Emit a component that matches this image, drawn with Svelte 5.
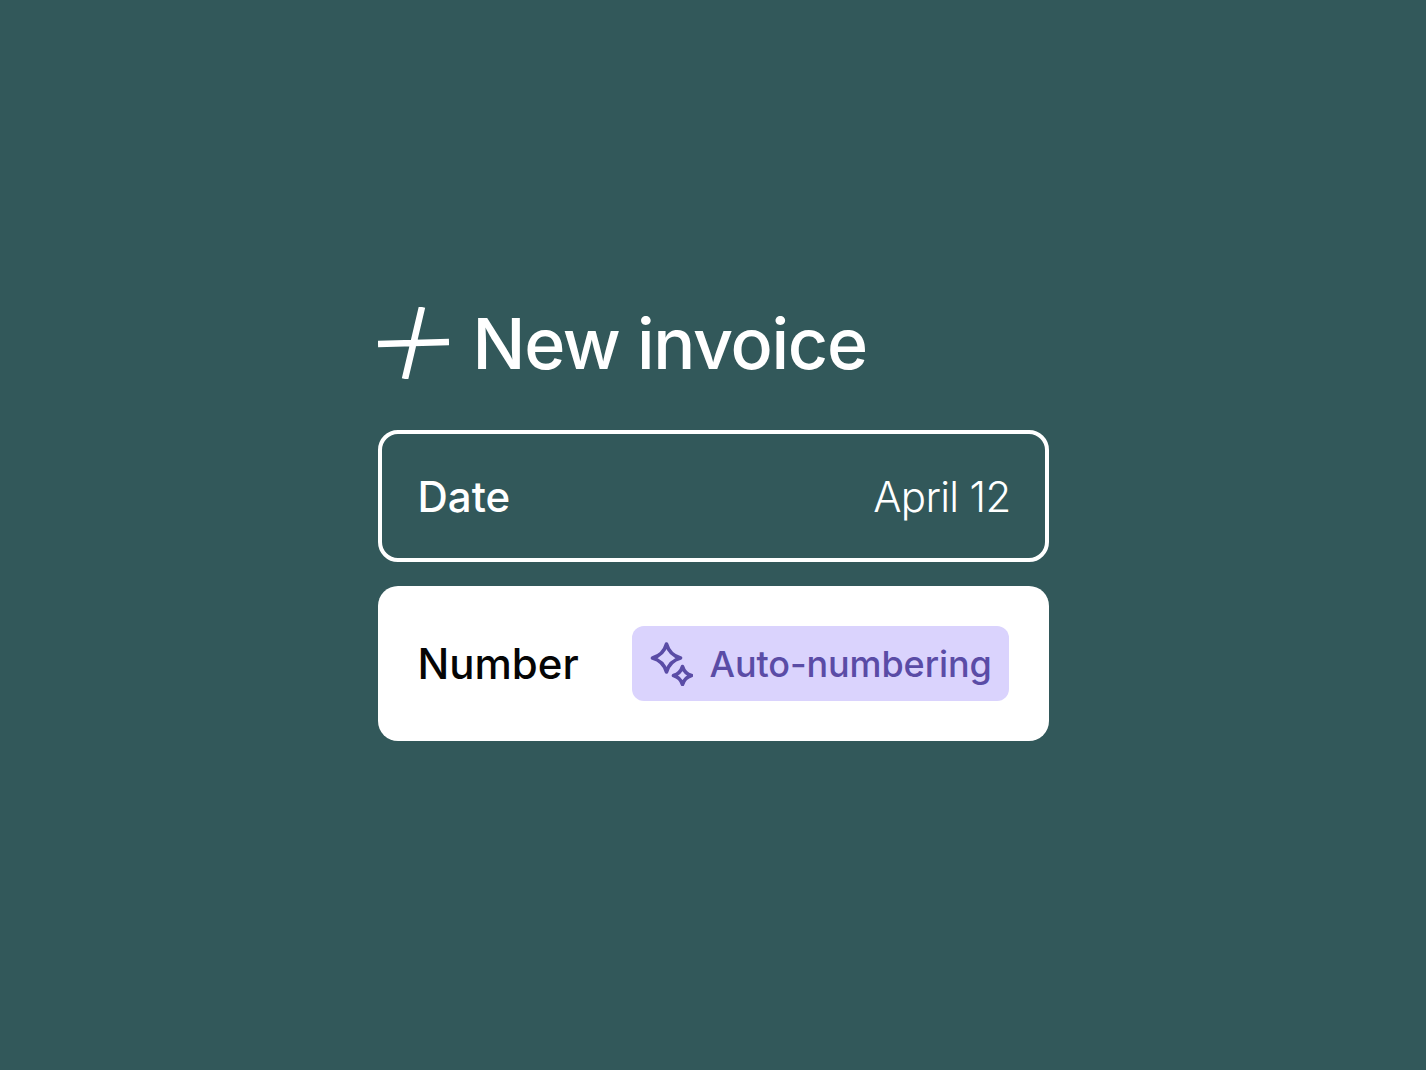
<script>
  const date = 'April 12';
</script>

<main class="page">
  <section class="stack">
    <h1 class="title">
      <svg class="plus" viewBox="0 0 71 72" aria-hidden="true">
        <path d="M0 37 71 35M44 0 27 72" fill="none" stroke="#fff" stroke-width="6.5" />
      </svg>
      New invoice
    </h1>

    <div class="row date">
      <span class="label">Date</span>
      <span class="value">{date}</span>
    </div>

    <div class="row number">
      <span class="label">Number</span>
      <span class="chip">
        <svg class="spark" viewBox="0 0 44 44" aria-hidden="true">
          <path d="M17.5 2Q20.5 13 31.5 16 20.5 19 17.5 30 14.5 19 3.5 16 14.5 13 17.5 2Z" fill="none" stroke="currentColor" stroke-width="3.6" stroke-linejoin="round" />
          <path d="M33.5 24.5Q35.5 31.5 42.5 33.5 35.5 35.5 33.5 42.5 31.5 35.5 24.5 33.5 31.5 31.5 33.5 24.5Z" fill="none" stroke="currentColor" stroke-width="3.6" stroke-linejoin="round" />
        </svg>
        Auto-numbering
      </span>
    </div>
  </section>
</main>

<style>
  :global(body) { background: #32585a; }

  .page {
    min-height: 1070px; box-sizing: border-box; padding-top: 307px;
    display: flex; justify-content: center;
    font-family: Inter, "Liberation Sans", sans-serif;
  }
  .stack { width: 671px; display: flex; flex-direction: column; }

  .title {
    margin: 0 0 51px; height: 72px;
    display: flex; align-items: center; gap: 24px;
    font-size: 70px; font-weight: 500; letter-spacing: -1.3px; color: #fff;
  }
  .plus { width: 71px; height: 72px; flex: none; }

  .row { display: flex; align-items: center; justify-content: space-between; box-sizing: border-box; border-radius: 20px; }
  .label { font-size: 42px; font-weight: 500; letter-spacing: 0; }

  .date { height: 132px; padding: 0 36px; border: 4px solid #fff; color: #fff; margin-bottom: 24px; }
  .value { margin-right: -2px; font-size: 42px; font-weight: 300; letter-spacing: -0.7px; }

  .number { height: 155px; padding: 40px; background: #fff; color: #050505; }
  .chip {
    width: 377px; height: 75px; box-sizing: border-box; padding-left: 17px;
    display: flex; align-items: center; gap: 17px;
    border-radius: 12px; background: #dad3fd; color: #5a4ca6;
    font-size: 36px; font-weight: 500; letter-spacing: -0.1px;
  }
  .spark { width: 44px; height: 44px; flex: none; }
</style>
